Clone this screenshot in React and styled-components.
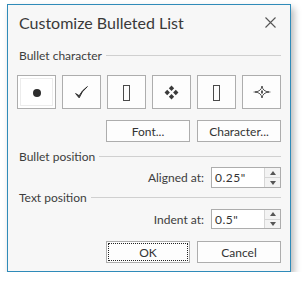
import React from "react";
import styled, { createGlobalStyle } from "styled-components";

const Global = createGlobalStyle`
  html, body { margin: 0; padding: 0; background: #ffffff; }
  body { font-family: Lato, "Open Sans", sans-serif; }
`;

const Page = styled.div`
  padding: 4px 0 0 7px;
`;

const Dialog = styled.div`
  box-sizing: border-box;
  width: 284px;
  height: 268px;
  border: 1px solid #2f8bb9;
  background: #f7f7f7;
  box-shadow: 3px 4px 7px rgba(0, 0, 0, 0.28);
  display: flex;
  flex-direction: column;
`;

const TitleBar = styled.div`
  height: 33px;
  display: flex;
  align-items: center;
  justify-content: space-between;
  padding: 0 14px 0 11px;
`;

const Title = styled.div`
  font-size: 16px;
  color: #3a3a3a;
  margin-top: 2px;
`;

const Close = styled.svg`
  width: 11px;
  height: 11px;
  margin-top: 1px;
`;

const Body = styled.div`
  display: flex;
  flex-direction: column;
  padding: 0 9px 0 9px;
`;

const Group = styled.div`
  display: flex;
  align-items: center;
  gap: 4px;
  height: 18px;
  margin-top: ${(p) => p.$mt || 0}px;
  padding-left: 2px;
  font-size: 12px;
  color: #3d3d3d;
  &::after {
    content: "";
    flex: 1;
    height: 1px;
    background: #d0d0d0;
    margin-top: 1px;
  }
`;

const Bullets = styled.div`
  display: flex;
  gap: 6px;
  margin-top: 11px;
`;

const BulletBtn = styled.div`
  box-sizing: border-box;
  width: 39px;
  height: 34px;
  border: 1px solid #adadad;
  background: ${(p) => (p.$selected ? "#ffffff" : "#fdfdfd")};
  display: flex;
  align-items: center;
  justify-content: center;
  color: #2d2d2d;
  position: relative;
  ${(p) =>
    p.$selected &&
    `&::before { content: ""; position: absolute; inset: 2px; border: 1px solid #ececec; }`}
`;

const Dot = styled.div`
  width: 8px;
  height: 8px;
  border-radius: 50%;
  background: #2d2d2d;
  margin-top: 2px;
`;

const Rect = styled.div`
  width: 7px;
  height: 16px;
  border: 1px solid #4a4a4a;
  box-sizing: border-box;
  margin-top: 1px;
`;

const Row = styled.div`
  display: flex;
  justify-content: flex-end;
  align-items: center;
  gap: 7px;
  margin-top: ${(p) => p.$mt || 0}px;
`;

const Button = styled.div`
  box-sizing: border-box;
  width: 84px;
  height: 22px;
  border: 1px solid #adadad;
  background: #fdfdfd;
  display: flex;
  align-items: center;
  justify-content: center;
  font-size: 12px;
  color: #333;
  position: relative;
  ${(p) =>
    p.$focused &&
    `&::before { content: ""; position: absolute; inset: 1px; border: 1px dotted #222; }`}
`;

const Label = styled.div`
  font-size: 12px;
  color: #3d3d3d;
`;

const Spin = styled.div`
  box-sizing: border-box;
  width: 70px;
  height: ${(p) => p.$h}px;
  border: 1px solid #adadad;
  background: #fff;
  display: flex;
`;

const SpinValue = styled.div`
  flex: 1;
  font-size: 12px;
  color: #333;
  padding-left: 3px;
  display: flex;
  align-items: center;
  letter-spacing: 0.5px;
`;

const SpinArrows = styled.div`
  width: 15px;
  border-left: 1px solid #d6d6d6;
  display: flex;
  flex-direction: column;
`;

const SpinHalf = styled.div`
  flex: 1;
  display: flex;
  align-items: center;
  justify-content: center;
  background: #f3f3f3;
  & + & { border-top: 1px solid #d6d6d6; }
`;

const Arrow = styled.div`
  width: 0;
  height: 0;
  border-left: 3px solid transparent;
  border-right: 3px solid transparent;
  ${(p) => (p.$up ? "border-bottom: 4px solid #555;" : "border-top: 4px solid #555;")}
`;

function Spinner({ value, h }) {
  return (
    <Spin $h={h}>
      <SpinValue>{value}</SpinValue>
      <SpinArrows>
        <SpinHalf><Arrow $up /></SpinHalf>
        <SpinHalf><Arrow /></SpinHalf>
      </SpinArrows>
    </Spin>
  );
}

export default function App() {
  return (
    <>
      <Global />
      <Page>
        <Dialog>
          <TitleBar>
            <Title>Customize Bulleted List</Title>
            <Close viewBox="0 0 11 11">
              <path d="M0.5 0.5 L10.5 10.5 M10.5 0.5 L0.5 10.5" stroke="#555" strokeWidth="1.1" />
            </Close>
          </TitleBar>
          <Body>
            <Group $mt={8}>Bullet character</Group>
            <Bullets>
              <BulletBtn $selected><Dot /></BulletBtn>
              <BulletBtn>
                <svg width="15" height="15" viewBox="0 0 14 14">
                  <path d="M1.5 8 L4.8 12 Q7 6 12.5 1.5 Q7.5 5 4.8 10 Z" fill="#2d2d2d" stroke="#2d2d2d" strokeWidth="0.9" strokeLinejoin="round" />
                </svg>
              </BulletBtn>
              <BulletBtn><Rect /></BulletBtn>
              <BulletBtn>
                <svg width="15" height="15" viewBox="0 0 14 14">
                  <path d="M7 0.5 L9.5 3 L7 5.5 L4.5 3Z M7 8.5 L9.5 11 L7 13.5 L4.5 11Z M3 4.5 L5.5 7 L3 9.5 L0.5 7Z M11 4.5 L13.5 7 L11 9.5 L8.5 7Z" fill="#3a3a3a" />
                </svg>
              </BulletBtn>
              <BulletBtn><Rect /></BulletBtn>
              <BulletBtn>
                <svg width="18" height="14" viewBox="0 0 18 14">
                  <path d="M9 1 Q9.6 6.4 16 7 Q9.6 7.6 9 13 Q8.4 7.6 2 7 Q8.4 6.4 9 1Z" fill="#ffffff" stroke="#3a3a3a" strokeWidth="0.9" strokeLinejoin="round" />
                  <path d="M0.5 7 H5 M13 7 H17.5" stroke="#555" strokeWidth="0.8" />
                  <path d="M8 7 L9 4.5 L10 7 L9 9.5Z" fill="#333" />
                </svg>
              </BulletBtn>
            </Bullets>
            <Row $mt={11}>
              <Button>Font...</Button>
              <Button>Character...</Button>
            </Row>
            <Group $mt={5}>Bullet position</Group>
            <Row $mt={2}>
              <Label>Aligned at:</Label>
              <Spinner value={'0.25"'} h={21} />
            </Row>
            <Group $mt={0}>Text position</Group>
            <Row $mt={3}>
              <Label>Indent at:</Label>
              <Spinner value={'0.5"'} h={20} />
            </Row>
            <Row $mt={12}>
              <Button $focused>OK</Button>
              <Button>Cancel</Button>
            </Row>
          </Body>
        </Dialog>
      </Page>
    </>
  );
}
